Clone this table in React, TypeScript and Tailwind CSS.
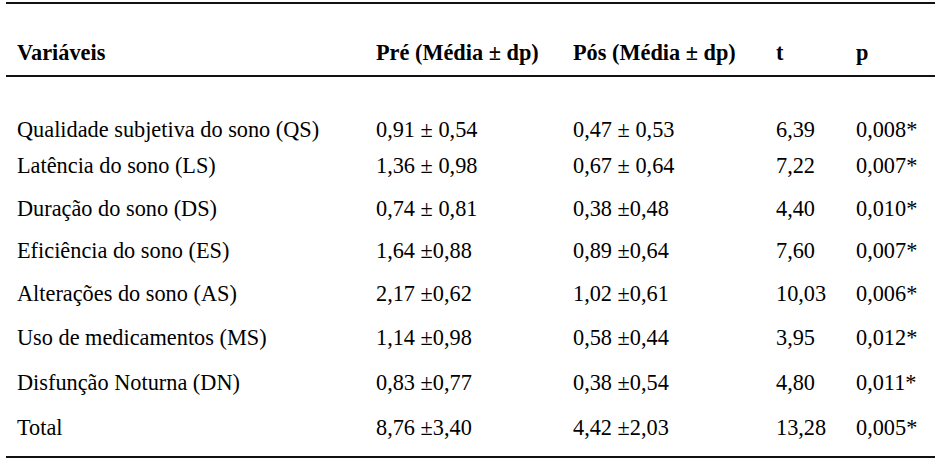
import React from 'react';

const rows: [string, string, string, string, string, number][] = [
  ['Qualidade subjetiva do sono (QS)', '0,91 ± 0,54', '0,47 ± 0,53', '6,39', '0,008*', 36],
  ['Latência do sono (LS)', '1,36 ± 0,98', '0,67 ± 0,64', '7,22', '0,007*', 43],
  ['Duração do sono (DS)', '0,74 ± 0,81', '0,38 ±0,48', '4,40', '0,010*', 42],
  ['Eficiência do sono (ES)', '1,64 ±0,88', '0,89 ±0,64', '7,60', '0,007*', 43],
  ['Alterações do sono (AS)', '2,17 ±0,62', '1,02 ±0,61', '10,03', '0,006*', 44],
  ['Uso de medicamentos (MS)', '1,14 ±0,98', '0,58 ±0,44', '3,95', '0,012*', 45],
  ['Disfunção Noturna (DN)', '0,83 ±0,77', '0,38 ±0,54', '4,80', '0,011*', 45],
  ['Total', '8,76 ±3,40', '4,42 ±2,03', '13,28', '0,005*', 39],
];

const Cells: React.FC<{ cells: string[] }> = ({ cells }) => (
  <>
    <div className="w-[370px] pl-[11px] whitespace-nowrap">{cells[0]}</div>
    <div className="w-[197px] whitespace-nowrap">{cells[1]}</div>
    <div className="w-[203px] whitespace-nowrap">{cells[2]}</div>
    <div className="w-[80px] whitespace-nowrap">{cells[3]}</div>
    <div className="flex-1 whitespace-nowrap">{cells[4]}</div>
  </>
);

export default function App() {
  return (
    <div
      className="w-[941px] h-[464px] bg-white text-black text-[22.3px] leading-[22px] overflow-hidden"
      style={{ fontFamily: '"Liberation Serif", "Times New Roman", serif' }}
    >
      <div className="ml-[6px] mt-[2px] w-[929px] border-t-2 border-b-2 border-[#111]">
        {/* header */}
        <div className="flex h-[73px] pt-[38px] font-bold border-b-2 border-[#111]">
          <Cells cells={['Variáveis', 'Pré (Média ± dp)', 'Pós (Média ± dp)', 't', 'p']} />
        </div>
        {/* body */}
        <div className="pt-[42px]">
          {rows.map((r) => (
            <div key={r[0]} className="flex" style={{ height: r[5] }}>
              <Cells cells={r.slice(0, 5) as string[]} />
            </div>
          ))}
        </div>
      </div>
    </div>
  );
}
